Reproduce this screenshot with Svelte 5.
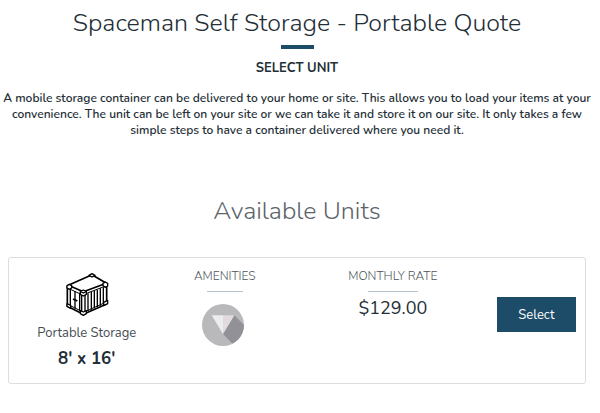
<script lang="ts">
  type Unit = { name: string; size: string; rate: string };

  const units: Unit[] = [
    { name: 'Portable Storage', size: "8' x 16'", rate: '$129.00' },
  ];

  let selected: Unit | null = $state(null);
</script>

<main>
  <header>
    <h1>Spaceman Self Storage - Portable Quote</h1>
    <div class="rule"></div>
    <h2>SELECT UNIT</h2>
    <p>
      A mobile storage container can be delivered to your home or site. This allows you to load your items at your
      convenience. The unit can be left on your site or we can take it and store it on our site. It only takes a few
      simple steps to have a container delivered where you need it.
    </p>
  </header>

  <section>
    <h3>Available Units</h3>
    {#each units as unit}
      <article class="card">
        <div class="unit">
          <svg class="container" viewBox="30 20 132 132" aria-hidden="true">
            <g fill="none" stroke="#000" stroke-width="4" stroke-linejoin="round">
              <path d="M40 60 111 28 154 54 85 79Z" fill="#fff" stroke-width="5" />
              <path d="M37 62V123L85 147 155 116V56" stroke-width="5" />
              <path d="M80 88V142M90 86V142M46 71V123M60 78V130M74 82V137" />
              <path d="M99 84V137M109 80V133M118 76V129M127 73V125M136 69V121M145 66V117" />
              <path d="M40 69 78 87M90 86 152 62M44 120 78 137M90 139 150 112" stroke-width="3" />
              <path d="M54 101 67 107" stroke-width="5" />
            </g>
            <g fill="#fff" stroke="#000" stroke-width="4" stroke-linejoin="round">
              <path d="M102 30 111 25 120 30 111 35Z" />
              <path d="M36 61 43 57 50 61V68L43 72 36 68Z" />
              <path d="M144 54 151 50 158 54V62L151 66 144 61Z" />
              <path d="M76 78 85 74 94 78V87L85 92 76 87Z" />
              <path d="M76 78 85 83 94 78" />
              <path d="M36 115 47 120V129L36 123Z" />
              <path d="M76 136 85 140 94 136V145L85 150 76 145Z" />
              <path d="M146 111 158 105V115L146 121Z" />
            </g>
          </svg>
          <div class="name">{unit.name}</div>
          <div class="size">{unit.size}</div>
        </div>
        <div class="amenities">
          <h4>AMENITIES</h4>
          <div class="badges">
            <svg class="badge" viewBox="0 0 126 126" role="img" aria-label="Amenity">
              <defs>
                <clipPath id="disc"><circle cx="63" cy="63" r="63" /></clipPath>
              </defs>
              <circle cx="63" cy="63" r="63" fill="#b9b9bb" />
              <path d="M97 34 130 67V126H98L63 90Z" fill="#929197" clip-path="url(#disc)" />
              <path d="M29 34H63V90Z" fill="#ececf0" />
              <path d="M63 34H97L63 90Z" fill="#e3dadd" />
            </svg>
          </div>
        </div>
        <div class="rate">
          <h4>MONTHLY RATE</h4>
          <div class="price">{unit.rate}</div>
        </div>
        <div class="action">
          <button type="button" onclick={() => (selected = unit)}>Select</button>
        </div>
      </article>
    {/each}
  </section>
</main>

<style>
  :global(body) {
    margin: 0;
    background: #fff;
  }
  main {
    padding: 6px 14px 0 8px;
    font-family: Nunito, Lato, sans-serif;
    font-size: 13px;
    color: #242e36;
    text-align: center;
  }
  h1, h2, h3, h4, p { margin: 0; }
  h1 {
    font-size: 25px;
    line-height: 34px;
    font-weight: 350;
  }
  .rule {
    width: 33px;
    height: 4px;
    margin: 5px auto 10px;
    background: #1d4c69;
  }
  h2 {
    font-size: 13px;
    line-height: 18px;
    font-weight: 700;
  }
  p {
    margin: 13px -8px 0;
    font-size: 12px;
    line-height: 16px;
    font-weight: 600;
  }
  h3 {
    margin: 57px 0 30px;
    font-size: 25px;
    line-height: 32px;
    font-weight: 350;
    color: #5c636a;
  }
  .card {
    display: grid;
    grid-template-columns: 150fr 130fr 205fr 89fr;
    padding: 9px 0 12px;
    border: 1px solid #dcdddf;
    border-radius: 3px;
  }
  .unit {
    padding: 5px 0 0 5px;
  }
  .container {
    display: block;
    width: 44px;
    height: 44px;
    margin: 0 auto;
  }
  .name {
    margin-top: 8px;
    line-height: 18px;
    color: #454d54;
  }
  .size {
    margin-top: 5px;
    font-size: 17px;
    line-height: 24px;
    font-weight: 700;
  }
  h4 {
    font-size: 12px;
    line-height: 18px;
    font-weight: 350;
    color: #4b535a;
  }
  h4::after {
    content: '';
    display: block;
    width: 36px;
    height: 1px;
    margin: 6px auto 0;
    background: #b9c2d3;
  }
  .rate h4::after { width: 50px; }
  .badges {
    padding: 12px 4px 0 0;
  }
  .badge {
    display: block;
    width: 42px;
    height: 42px;
    margin: 0 auto;
  }
  .price {
    margin-top: 4px;
    font-size: 18px;
    line-height: 24px;
  }
  .action {
    padding: 30px 9px 0 1px;
  }
  button {
    width: 100%;
    height: 35px;
    padding: 0;
    border: 0;
    background: #1d4c69;
    color: #fff;
    font: inherit;
    cursor: pointer;
  }
</style>
